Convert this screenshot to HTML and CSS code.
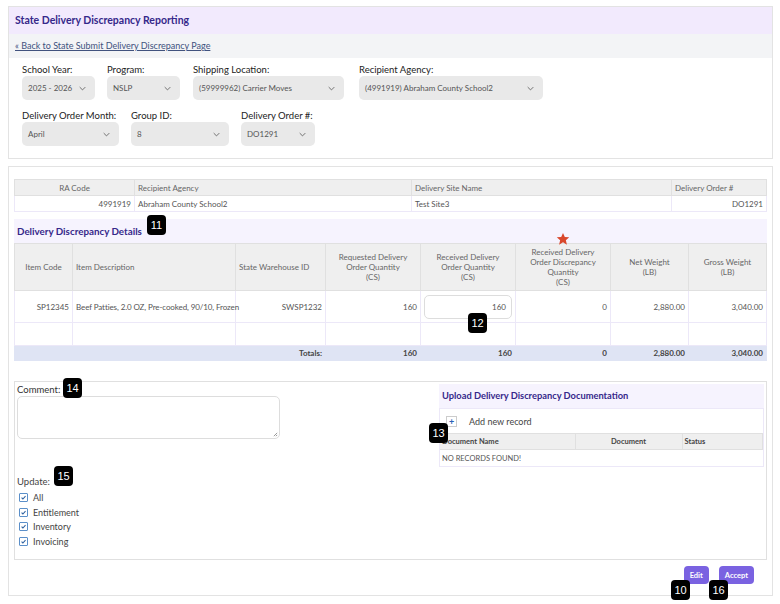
FILE: index.html
```html
<!DOCTYPE html>
<html lang="en">
<head>
    <meta charset="UTF-8">
    <title>State Delivery Discrepancy Reporting</title>
    <link rel="stylesheet" href="styles.css">
</head>
<body>
    <div class="panel top-panel">
        <div class="panel-title">State Delivery Discrepancy Reporting</div>
        <div class="back-bar"><a href="#">« Back to State Submit Delivery Discrepancy Page</a></div>
        <div class="filters">
            <div class="filter-row">
                <div class="field">
                    <label>School Year:</label>
                    <div class="select w73"><span>2025 - 2026</span><svg viewBox="0 0 10 6"><path d="M1 1l4 4 4-4"/></svg></div>
                </div>
                <div class="field">
                    <label>Program:</label>
                    <div class="select w73"><span>NSLP</span><svg viewBox="0 0 10 6"><path d="M1 1l4 4 4-4"/></svg></div>
                </div>
                <div class="field gap-13">
                    <label>Shipping Location:</label>
                    <div class="select w151"><span>(59999962) Carrier Moves</span><svg viewBox="0 0 10 6"><path d="M1 1l4 4 4-4"/></svg></div>
                </div>
                <div class="field gap-15">
                    <label>Recipient Agency:</label>
                    <div class="select w184"><span>(4991919) Abraham County School2</span><svg viewBox="0 0 10 6"><path d="M1 1l4 4 4-4"/></svg></div>
                </div>
            </div>
            <div class="filter-row">
                <div class="field">
                    <label>Delivery Order Month:</label>
                    <div class="select w97"><span>April</span><svg viewBox="0 0 10 6"><path d="M1 1l4 4 4-4"/></svg></div>
                </div>
                <div class="field">
                    <label>Group ID:</label>
                    <div class="select w98"><span>8</span><svg viewBox="0 0 10 6"><path d="M1 1l4 4 4-4"/></svg></div>
                </div>
                <div class="field">
                    <label>Delivery Order #:</label>
                    <div class="select w74"><span>DO1291</span><svg viewBox="0 0 10 6"><path d="M1 1l4 4 4-4"/></svg></div>
                </div>
            </div>
        </div>
    </div>

    <div class="panel main-panel">
        <table class="grid info-table">
            <colgroup>
                <col style="width:120px"><col style="width:277px"><col style="width:260px"><col>
            </colgroup>
            <thead>
                <tr><th class="c">RA Code</th><th>Recipient Agency</th><th>Delivery Site Name</th><th>Delivery Order #</th></tr>
            </thead>
            <tbody>
                <tr><td class="r">4991919</td><td>Abraham County School2</td><td>Test Site3</td><td class="r">DO1291</td></tr>
            </tbody>
        </table>

        <div class="section-title">Delivery Discrepancy Details</div>

        <table class="grid detail-table">
            <colgroup>
                <col style="width:58px"><col style="width:163px"><col style="width:90px"><col style="width:95px"><col style="width:95px"><col style="width:95px"><col style="width:78px"><col>
            </colgroup>
            <thead>
                <tr>
                    <th class="c">Item Code</th>
                    <th>Item Description</th>
                    <th>State Warehouse ID</th>
                    <th class="c">Requested Delivery<br>Order Quantity<br>(CS)</th>
                    <th class="c">Received Delivery<br>Order Quantity<br>(CS)</th>
                    <th class="c star-cell">
                        <svg class="star" viewBox="0 0 24 24"><path d="M12 1.5l3.1 7.1 7.6.6-5.8 5 1.8 7.5L12 17.7l-6.7 4 1.8-7.5-5.8-5 7.6-.6z"/></svg>
                        Received Delivery<br>Order Discrepancy<br>Quantity<br>(CS)
                    </th>
                    <th class="c">Net Weight<br>(LB)</th>
                    <th class="c">Gross Weight<br>(LB)</th>
                </tr>
            </thead>
            <tbody>
                <tr class="item-row">
                    <td class="r">SP12345</td>
                    <td class="desc">Beef Patties, 2.0 OZ, Pre-cooked, 90/10, Frozen</td>
                    <td class="r">SWSP1232</td>
                    <td class="r">160</td>
                    <td><div class="qty-input">160</div></td>
                    <td class="r">0</td>
                    <td class="r">2,880.00</td>
                    <td class="r">3,040.00</td>
                </tr>
                <tr class="empty-row"><td></td><td></td><td></td><td></td><td></td><td></td><td></td><td></td></tr>
                <tr class="totals-row">
                    <td></td><td></td><td class="r">Totals:</td>
                    <td class="r">160</td><td class="r">160</td><td class="r">0</td><td class="r">2,880.00</td><td class="r">3,040.00</td>
                </tr>
            </tbody>
        </table>

        <div class="bottom-box">
            <div class="left-col">
                <label class="field-label">Comment:</label>
                <div class="comment-box"><svg class="grip" viewBox="0 0 6 6"><path d="M5 1L1 5M5 3.5L3.5 5"/></svg></div>
                <div class="update-label">Update:</div>
                <ul class="checks">
                    <li><span class="box"><svg viewBox="0 0 8 8"><path d="M1.8 4.2l1.5 1.5 3-3.2"/></svg></span>All</li>
                    <li><span class="box"><svg viewBox="0 0 8 8"><path d="M1.8 4.2l1.5 1.5 3-3.2"/></svg></span>Entitlement</li>
                    <li><span class="box"><svg viewBox="0 0 8 8"><path d="M1.8 4.2l1.5 1.5 3-3.2"/></svg></span>Inventory</li>
                    <li><span class="box"><svg viewBox="0 0 8 8"><path d="M1.8 4.2l1.5 1.5 3-3.2"/></svg></span>Invoicing</li>
                </ul>
            </div>
            <div class="upload">
                <div class="upload-title">Upload Delivery Discrepancy Documentation</div>
                <div class="upload-grid">
                    <div class="add-row"><span class="plus">+</span>Add new record</div>
                    <table class="doc-table">
                        <colgroup><col style="width:135px"><col style="width:107px"><col></colgroup>
                        <thead><tr><th>Document Name</th><th class="c">Document</th><th>Status</th></tr></thead>
                        <tbody><tr><td colspan="3">NO RECORDS FOUND!</td></tr></tbody>
                    </table>
                </div>
            </div>
        </div>

        <div class="actions">
            <button class="btn">Edit</button>
            <button class="btn">Accept</button>
        </div>
    </div>

    <span class="badge" style="left:147px;top:215px">11</span>
    <span class="badge" style="left:468px;top:313px">12</span>
    <span class="badge" style="left:429px;top:423px">13</span>
    <span class="badge" style="left:63px;top:378px">14</span>
    <span class="badge" style="left:54px;top:466px">15</span>
    <span class="badge" style="left:671px;top:580px">10</span>
    <span class="badge" style="left:709px;top:580px">16</span>
</body>
</html>
```

FILE: styles.css
```css
body {
    margin: 0;
    padding: 6px 7px 0 8px;
    font-family: Lato, "Open Sans", sans-serif;
    color: #333;
    background: #fff;
    position: relative;
    height: 598px;
    overflow: hidden;
}

.panel {
    border: 1px solid #e3e3e3;
    background: #fff;
}

.top-panel {
    height: 153px;
    box-sizing: border-box;
}

.panel-title {
    background: #f2eafd;
    height: 27px;
    line-height: 27px;
    padding-left: 6px;
    font-size: 10.5px;
    font-weight: bold;
    color: #35288a;
}

.back-bar {
    background: #f3f4f6;
    height: 24px;
    line-height: 24px;
    padding-left: 6px;
    font-size: 9px;
}

.back-bar a {
    color: #41527e;
}

.filters {
    padding: 6px 13px 0;
}

.filter-row {
    display: flex;
    gap: 12px;
    margin-bottom: 10px;
}

.gap-13 { margin-left: 1px; }
.gap-15 { margin-left: 3px; }

.field label {
    display: block;
    font-size: 9.5px;
    color: #222;
    margin-bottom: 1px;
}

.select {
    height: 24px;
    background: #e9e9e9;
    border-radius: 5px;
    display: flex;
    align-items: center;
    justify-content: space-between;
    padding: 0 9px 0 6px;
    box-sizing: border-box;
    font-size: 8px;
    color: #555;
}

.select svg {
    width: 7px;
    height: 5px;
    fill: none;
    stroke: #666;
    stroke-width: 1.3;
}

.w73 { width: 73px; }
.w74 { width: 74px; }
.w97 { width: 97px; }
.w98 { width: 98px; }
.w151 { width: 151px; }
.w184 { width: 184px; }

.main-panel {
    margin-top: 7px;
    height: 430px;
    box-sizing: border-box;
    padding: 12px 5px 0;
}

.grid {
    width: 100%;
    border-collapse: collapse;
    table-layout: fixed;
    font-size: 8px;
    color: #555;
}

.grid th {
    background: #efefef;
    font-weight: normal;
    text-align: left;
    border: 1px solid #e0e0e0;
    padding: 0 3px;
    color: #666;
}

.grid td {
    border: 1px solid #ece8f8;
    padding: 0 3px;
}

.grid .c { text-align: center; }
.grid .r { text-align: right; }

.grid .desc {
    white-space: nowrap;
    letter-spacing: -0.1px;
}

.info-table th,
.info-table td {
    height: 15px;
}

.section-title {
    margin-top: 7px;
    background: #f6f3fe;
    height: 24px;
    line-height: 24px;
    padding-left: 3px;
    font-size: 9.8px;
    font-weight: bold;
    color: #35288a;
}

.detail-table th {
    height: 46px;
    line-height: 10px;
}

.detail-table .star-cell {
    position: relative;
}

.star {
    position: absolute;
    top: -12px;
    left: 50%;
    margin-left: -7px;
    width: 14px;
    height: 14px;
    fill: #d9472b;
}

.item-row td {
    height: 31px;
}

.qty-input {
    border: 1px solid #ddd;
    border-radius: 5px;
    height: 22px;
    line-height: 22px;
    text-align: right;
    padding-right: 5px;
}

.empty-row td {
    height: 22px;
}

.totals-row td {
    height: 14px;
    background: #dfe4f4;
    border-color: #dfe4f4;
    font-weight: bold;
    color: #444;
}

.bottom-box {
    margin-top: 20px;
    border: 1px solid #e0e0e0;
    height: 179px;
    box-sizing: border-box;
    display: flex;
    justify-content: space-between;
    padding: 2px 2px 0 2px;
}

.left-col {
    padding-top: 0;
}

.field-label {
    display: block;
    font-size: 9.5px;
    line-height: 12px;
    color: #333;
}

.comment-box {
    width: 263px;
    height: 43px;
    border: 1px solid #ddd;
    border-radius: 5px;
    box-sizing: border-box;
    position: relative;
}

.grip {
    position: absolute;
    right: 1px;
    bottom: 1px;
    width: 5px;
    height: 5px;
    stroke: #666;
    stroke-width: 0.8;
}

.update-label {
    margin-top: 37px;
    font-size: 9.5px;
    line-height: 12px;
    color: #444;
}

.checks {
    list-style: none;
    margin: 2px 0 0;
    padding: 0;
}

.checks li {
    display: flex;
    align-items: center;
    height: 14.7px;
    font-size: 9px;
    color: #444;
}

.checks .box {
    width: 7px;
    height: 7px;
    border: 1px solid #5b8fc9;
    border-radius: 1px;
    margin: 0 5px 0 2px;
    display: flex;
}

.checks .box svg {
    width: 7px;
    height: 7px;
    fill: none;
    stroke: #2b5f9e;
    stroke-width: 1.2;
}

.upload {
    width: 325px;
}

.upload-title {
    background: #f6f3fe;
    height: 24px;
    line-height: 24px;
    padding-left: 3px;
    font-size: 9.3px;
    font-weight: bold;
    color: #35288a;
}

.upload-grid {
    border: 1px solid #ece8f8;
}

.add-row {
    height: 24px;
    display: flex;
    align-items: center;
    font-size: 9px;
    color: #444;
    padding-left: 6px;
}

.plus {
    width: 9px;
    height: 9px;
    border: 1px solid #ccc;
    color: #2b5fb4;
    font-size: 9px;
    font-weight: bold;
    line-height: 9px;
    text-align: center;
    margin-right: 12px;
}

.doc-table {
    width: 100%;
    border-collapse: collapse;
    table-layout: fixed;
    font-size: 7.5px;
    color: #555;
}

.doc-table th {
    background: #efefef;
    border: 1px solid #e0e0e0;
    border-left: 0;
    height: 15px;
    text-align: left;
    padding: 0 2px;
    color: #444;
}

.doc-table th.c {
    text-align: center;
}

.doc-table td {
    height: 16px;
    padding: 0 2px;
}

.actions {
    display: flex;
    justify-content: flex-end;
    gap: 10px;
    padding: 6px 13px 0 0;
}

.btn {
    border: 0;
    border-radius: 4px;
    background: #7a62e1;
    color: #fff;
    font-family: inherit;
    font-size: 7.5px;
    font-weight: bold;
    height: 18px;
    padding: 0 6px;
}

.badge {
    position: absolute;
    width: 19px;
    height: 20px;
    background: #000;
    color: #fff;
    border-radius: 4px;
    font-family: "Liberation Sans", Arial, sans-serif;
    font-size: 11px;
    line-height: 20px;
    text-align: center;
}
```
